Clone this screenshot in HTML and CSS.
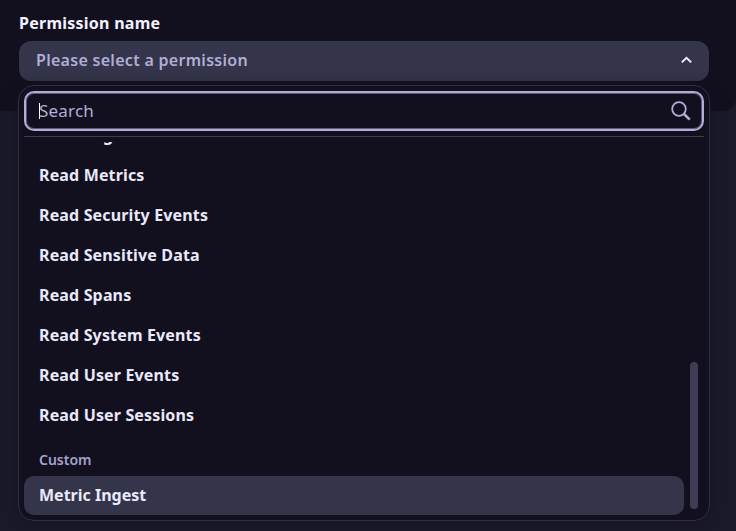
FILE: index.html
```html
<!DOCTYPE html>
<html lang="en">
<head>
<meta charset="utf-8">
<title>Permission name</title>
<link rel="stylesheet" href="styles.css">
</head>
<body>
<section class="panel">
  <div class="label"><span>Permission name</span></div>
  <div class="select">
    <span>Please select a permission</span>
    <svg class="chevron" width="12" height="8" viewBox="0 0 12 8"><path d="M1.8 6.4 6.5 1.8l4.7 4.6" fill="none" stroke="#f0effc" stroke-width="2"/></svg>
  </div>
</section>
<div class="popup">
  <div class="search">
    <span class="caret"></span>
    <span>Search</span>
    <svg class="magnifier" width="20" height="20" viewBox="0 0 20 20" fill="none" stroke="#b0aed6"><circle cx="8" cy="8" r="6.8" stroke-width="1.8"/><path d="m13 13 5.7 5.7" stroke-width="2.6"/></svg>
  </div>
  <div class="viewport">
    <ul class="list">
      <li class="item"><span>Read Logs</span></li>
      <li class="item"><span>Read Metrics</span></li>
      <li class="item"><span>Read Security Events</span></li>
      <li class="item"><span>Read Sensitive Data</span></li>
      <li class="item"><span>Read Spans</span></li>
      <li class="item"><span>Read System Events</span></li>
      <li class="item"><span>Read User Events</span></li>
      <li class="item"><span>Read User Sessions</span></li>
      <li class="group"><span>Custom</span></li>
      <li class="item active"><span>Metric Ingest</span></li>
    </ul>
    <div class="scrollbar"></div>
  </div>
</div>
</body>
</html>
```
FILE: styles.css
```css
* { box-sizing: border-box; }
body {
  margin: 0;
  width: 736px;
  height: 531px;
  overflow: hidden;
  background: #1a1a2b;
  color: #eae9fa;
  font: 700 16px/20px "Noto Sans", sans-serif;
}
span { white-space: nowrap; }
.panel {
  height: 111px;
  padding: 13px 27px 0 19px;
  background: #12101f;
  border-bottom-right-radius: 12px;
}
.label { height: 28px; color: #f2f1fd; letter-spacing: .25px; }
.select {
  display: flex;
  align-items: center;
  justify-content: space-between;
  height: 40px;
  padding: 0 17px 2px;
  border-radius: 12px;
  background: #34344a;
  color: #b0aed6;
  font-weight: 600;
  letter-spacing: .29px;
}
.popup {
  position: absolute;
  left: 18px;
  top: 85px;
  width: 692px;
  height: 436px;
  padding: 5px;
  border: 1px solid #302f40;
  border-radius: 16px;
  background: #12101f;
  box-shadow: 0 4px 16px rgba(18, 16, 31, .6);
}
.search {
  display: flex;
  align-items: center;
  height: 40px;
  padding: 0 11px 0 13px;
  border: 2px solid #b0aed6;
  border-radius: 10px;
  box-shadow: inset 0 0 0 1px #5c5a7b;
  color: #b0aed6;
  font-weight: 400;
  font-size: 17px;
  letter-spacing: .2px;
}
.caret { width: 1px; height: 16px; margin-right: -1px; background: #fff; }
.magnifier { margin-left: auto; }
.viewport {
  display: flex;
  height: 384px;
  margin-top: 5px;
  padding-top: 5px;
  border-top: 1px solid #3d3b50;
}
.list {
  display: flex;
  flex-direction: column;
  justify-content: flex-end;
  width: 660px;
  height: 373px;
  margin: 0;
  padding: 0;
  overflow: hidden;
  list-style: none;
}
.item {
  display: flex;
  flex: none;
  align-items: center;
  height: 40px;
  padding-left: 15px;
  letter-spacing: .15px;
}
.group {
  flex: none;
  height: 41px;
  padding: 15px 0 0 15px;
  color: #a5a2ca;
  font-size: 14px;
  font-weight: 600;
}
.active { height: 39px; padding-bottom: 1px; border-radius: 10px; background: #34344a; letter-spacing: 0; }
.scrollbar {
  width: 8px;
  height: 147px;
  margin: 220px 0 0 6px;
  border-radius: 4px;
  background: #3f3d53;
}
```
